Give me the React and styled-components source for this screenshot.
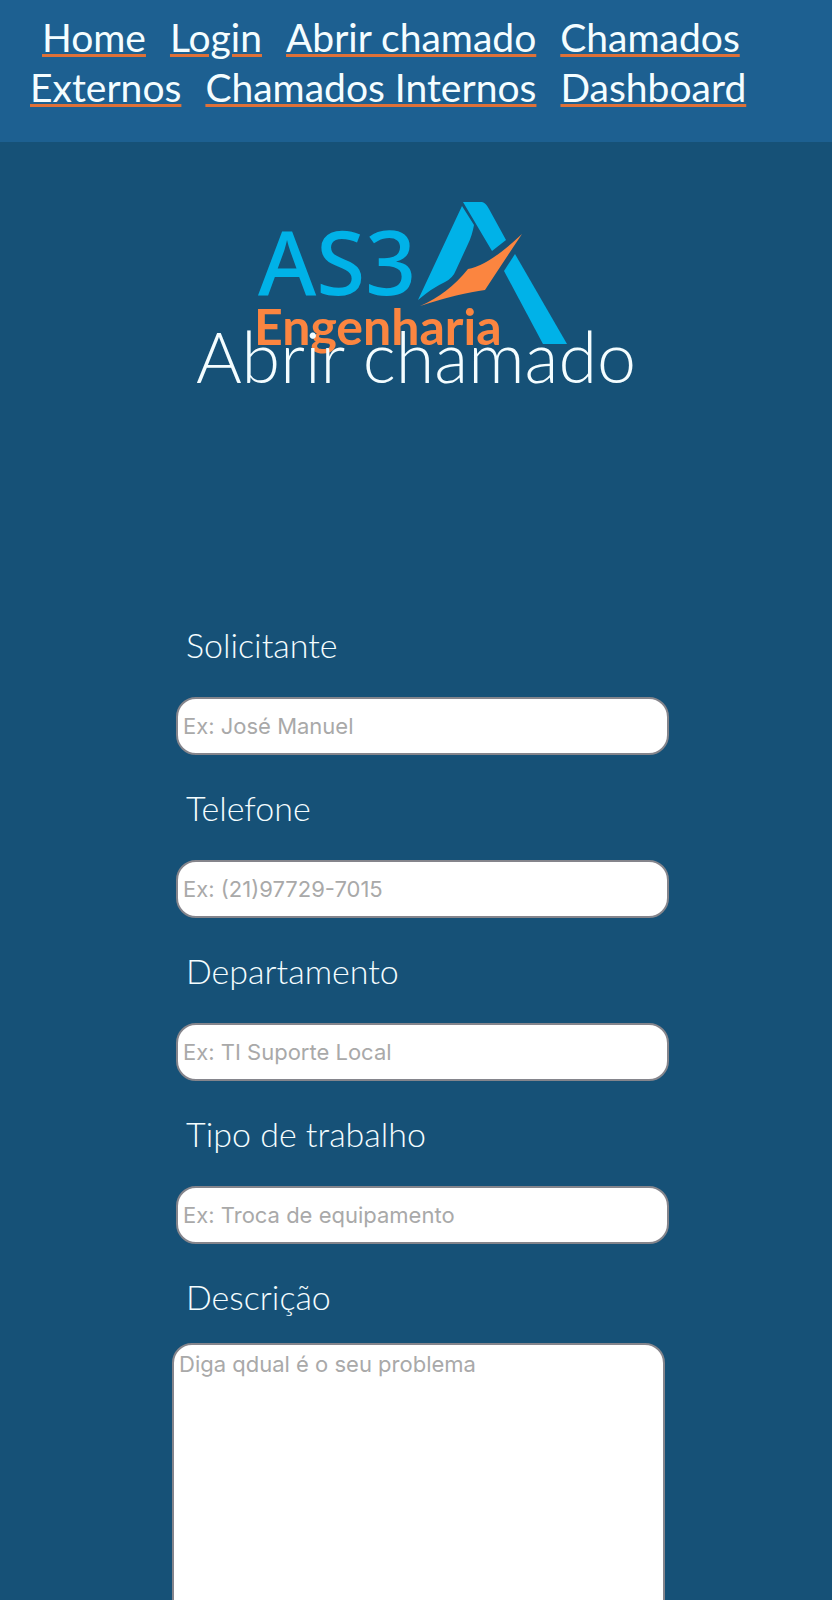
import React from "react";
import styled, { createGlobalStyle } from "styled-components";

const GlobalStyle = createGlobalStyle`
  *, *::before, *::after { box-sizing: border-box; }
  body {
    margin: 0;
    background: #165177;
    color: #f4fdff;
    font-family: "Gill Sans", Lato, "Open Sans", sans-serif;
  }
`;

const Header = styled.header`
  padding: 12px 30px 30px;
  background: #1d6091;
`;

const Nav = styled.nav`
  font-size: 39px;
  line-height: 50px;
`;

const NavLink = styled.a`
  margin: 0 12px;
  color: #f4fdff;
  text-decoration: underline #df7138;
  text-decoration-thickness: 3px;
  text-underline-offset: 2px;
`;

const Hero = styled.div`
  display: flex;
  flex-direction: column;
  align-items: center;
  padding: 60px 20px 0;
`;

const Logo = styled.svg`
  display: block;
  width: 328px;
  height: 166px;
  overflow: visible;
`;

const Title = styled.h1`
  margin: -56px 0 0;
  font-size: 70px;
  line-height: 88px;
  font-weight: 300;
  text-align: center;
  position: relative;
`;

const Form = styled.form`
  display: flex;
  flex-direction: column;
  max-width: 506px;
  margin: 0 auto;
  padding: 222px 0 0 9px;
`;

const Field = styled.div`
  display: flex;
  flex-direction: column;
  gap: ${(p) => (p.$tight ? "24px" : "30px")};
  margin-bottom: 30px;
`;

const Label = styled.label`
  padding-left: 14px;
  font-size: 34px;
  line-height: 45px;
  font-weight: 300;
`;

const control = `
  border: 2px solid #85858c;
  border-radius: 20px;
  background: #fff;
  color: #222;
  font-family: Inter, sans-serif;
  font-size: 22px;
  line-height: 28px;
  outline: none;
  &::placeholder { color: #a9a9a9; opacity: 1; }
`;

const Input = styled.input`
  ${control}
  height: 58px;
  margin-left: 4px;
  padding: 0 5px;
`;

const TextArea = styled.textarea`
  ${control}
  height: 400px;
  margin-right: 4px;
  padding: 5px;
  resize: none;
`;

const links = ["Home", "Login", "Abrir chamado", "Chamados Externos", "Chamados Internos", "Dashboard"];

const fields = [
  { id: "solicitante", label: "Solicitante", placeholder: "Ex: José Manuel" },
  { id: "telefone", label: "Telefone", placeholder: "Ex: (21)97729-7015", type: "tel" },
  { id: "departamento", label: "Departamento", placeholder: "Ex: TI Suporte Local" },
  { id: "tipo", label: "Tipo de trabalho", placeholder: "Ex: Troca de equipamento" },
];

function CompanyLogo() {
  return (
    <Logo viewBox="-4 0 328 166" role="img" aria-label="AS3 Engenharia">
      <defs>
        <filter id="soften" x="-5%" y="-5%" width="110%" height="110%">
          <feGaussianBlur stdDeviation="0.7" />
        </filter>
      </defs>
      <g filter="url(#soften)">
        <g fill="#00b2e8">
          <text x="2" y="93" fontFamily="Noto Sans, sans-serif" fontSize="89" fontWeight="500">AS3</text>
          <path d="M206 4 L218 23 Q216 34 212 42 L200 68 Q197 76 189 80 Q176 86 162 98 Z" />
          <path d="M207 0 H226 Q230 1 233 7 L250 38 L236 49 Z" />
          <path d="M259 52 L311 142 H287 L248 69 Z" />
        </g>
        <g fill="#fb8540">
          <text x="-2" y="143" fontFamily="Lato, sans-serif" fontSize="50" fontWeight="700">Engenharia</text>
          <path d="M266 32 Q246 62 229 88 Q204 91 164 104 Q192 92 212 67 Q232 64 266 32 Z" />
        </g>
      </g>
    </Logo>
  );
}

export default function App() {
  return (
    <>
      <GlobalStyle />
      <Header>
        <Nav>
          {links.map((text) => (
            <NavLink key={text} href="#">{text}</NavLink>
          ))}
        </Nav>
      </Header>
      <main>
        <Hero>
          <CompanyLogo />
          <Title>Abrir chamado</Title>
        </Hero>
        <Form>
          {fields.map((f) => (
            <Field key={f.id}>
              <Label htmlFor={f.id}>{f.label}</Label>
              <Input id={f.id} type={f.type || "text"} placeholder={f.placeholder} />
            </Field>
          ))}
          <Field $tight>
            <Label htmlFor="descricao">Descrição</Label>
            <TextArea id="descricao" placeholder="Diga qdual é o seu problema" />
          </Field>
        </Form>
      </main>
    </>
  );
}
